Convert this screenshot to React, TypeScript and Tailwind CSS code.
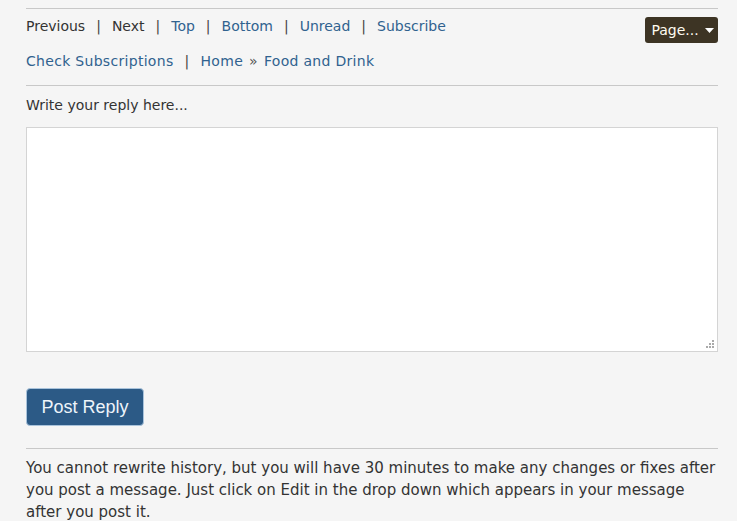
export default function App() {
  const sep = <span className="px-[11px] text-[#444]">|</span>;
  return (
    <div className="min-h-[521px] w-[737px] overflow-hidden bg-[#f5f5f5] pl-[26px] pr-[19px] pt-[8px] font-['DejaVu_Sans',Verdana,sans-serif] text-[#333]">
      <div className="border-t border-[#c8c8c8]" />
      <div className="flex items-start justify-between pt-[7px]">
        <div className="text-[14px] leading-[20px]">
          <div>
            <a className="text-[#333]">Previous</a>
            {sep}
            <a className="text-[#333]">Next</a>
            {sep}
            <a className="text-[#30628f]">Top</a>
            {sep}
            <a className="text-[#30628f]">Bottom</a>
            {sep}
            <a className="text-[#30628f]">Unread</a>
            {sep}
            <a className="text-[#30628f]">Subscribe</a>
          </div>
          <div className="mt-[15px] tracking-[0.3px]">
            <a className="text-[#30628f]">Check Subscriptions</a>
            {sep}
            <a className="text-[#30628f]">Home</a>
            <span className="px-[6px] text-[#555]">»</span>
            <a className="text-[#30628f]">Food and Drink</a>
          </div>
        </div>
        <button className="mt-[1px] flex h-[26px] w-[73px] items-center justify-center gap-[6px] rounded-[3px] bg-[#3d3424] pl-[2px] text-[14px] text-[#fffbf0]">
          Page...
          <svg width="9" height="5" viewBox="0 0 9 5">
            <path d="M0 0h9L4.5 5z" fill="white" />
          </svg>
        </button>
      </div>
      <div className="mt-[14px] border-t border-[#c8c8c8]" />
      <div className="pt-[9px] text-[14px] leading-[20px]">Write your reply here...</div>
      <div className="relative mt-[12px] h-[225px] border border-[#d4d4d4] bg-white">
        <svg className="absolute bottom-[3px] right-[3px]" width="9" height="9" viewBox="0 0 9 9">
          <g fill="#aaa">
            <rect x="7" y="1" width="2" height="2" />
            <rect x="4" y="4" width="2" height="2" />
            <rect x="7" y="4" width="2" height="2" />
            <rect x="1" y="7" width="2" height="2" />
            <rect x="4" y="7" width="2" height="2" />
            <rect x="7" y="7" width="2" height="2" />
          </g>
        </svg>
      </div>
      <button className="mt-[36px] h-[38px] w-[118px] rounded-[4px] border border-[#a9c3db] bg-[#2c5a86] font-['Liberation_Sans',Arial,sans-serif] text-[18px] text-[#eef4fa]">
        Post Reply
      </button>
      <div className="mt-[22px] border-t border-[#c8c8c8]" />
      <p className="pt-[8px] text-[15px] leading-[22px]">
        You cannot rewrite history, but you will have 30 minutes to make any changes or fixes after you post a message. Just click on Edit in the drop down which appears in your message after you post it.
      </p>
    </div>
  );
}
